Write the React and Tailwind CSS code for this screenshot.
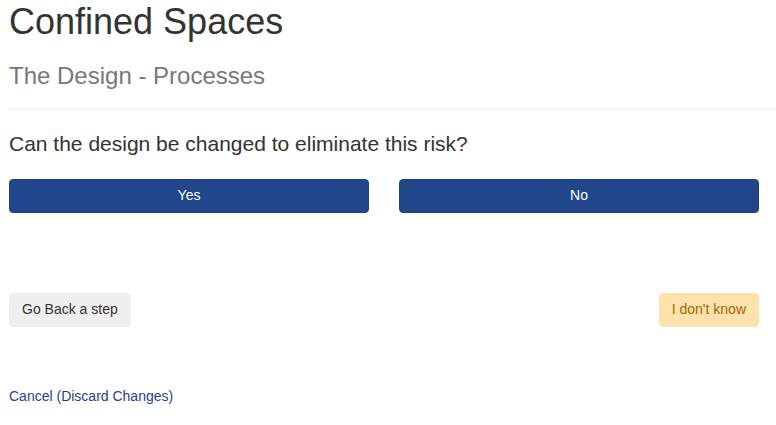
/**
 * Risk question step - Confined Spaces
 */

export default function App() {
  return (
    <div
      className="min-h-[425px] bg-white pt-[2px] pl-[9px] text-[#333]"
      style={{ fontFamily: '"Liberation Sans", Arial, sans-serif' }}
    >
      {/* Header */}
      <h1 className="text-[36px] leading-[1.1] font-normal text-[#333]">Confined Spaces</h1>
      <h3 className="mt-[21px] text-[24px] leading-[1.1] font-normal text-[#777]">
        The Design - Processes
      </h3>
      <hr className="mt-[19px] border-0 border-t border-[#eee]" />

      {/* Question */}
      <div className="pr-[17px]">
        <p className="mt-[23px] text-[21px] leading-[23px]">
          Can the design be changed to eliminate this risk?
        </p>

        <div className="mt-[24px] grid grid-cols-2 gap-[30px]">
          <button className="h-[34px] rounded-[4px] border border-[#1e3f80] bg-[#22468a] text-[14px] text-white">
            Yes
          </button>
          <button className="h-[34px] rounded-[4px] border border-[#1e3f80] bg-[#22468a] text-[14px] text-white">
            No
          </button>
        </div>

        {/* Step navigation */}
        <div className="mt-[80px] flex items-center justify-between">
          <button className="h-[34px] rounded-[4px] border border-[#eee] bg-[#efefef] px-[12px] text-[14px] text-[#333]">
            Go Back a step
          </button>
          <button className="h-[34px] rounded-[4px] border border-[#fee2ab] bg-[#fee2ab] px-[12px] text-[14px] text-[#a3650d]">
            I don't know
          </button>
        </div>

        <div className="mt-[59px] text-[14px] leading-[20px]">
          <a href="#" className="text-[#23438a]">
            Cancel (Discard Changes)
          </a>
        </div>
      </div>
    </div>
  );
}
